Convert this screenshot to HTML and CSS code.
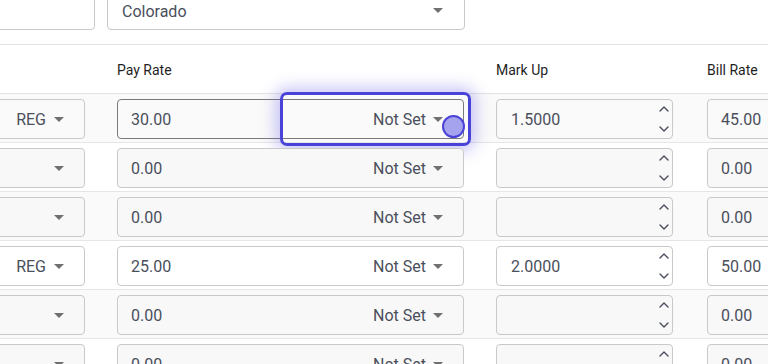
FILE: index.html
```html
<!DOCTYPE html>
<html>
<head>
<meta charset="utf-8">
<link rel="stylesheet" href="styles.css">
</head>
<body>
<div class="page">
  <div class="top">
    <div class="field top-left"></div>
    <div class="field top-state"><span class="val">Colorado</span><span class="caret"></span></div>
  </div>
  <div class="head">
    <div class="c1"></div>
    <div class="c2 label">Pay Rate</div>
    <div class="c3 label">Mark Up</div>
    <div class="c4 label">Bill Rate</div>
  </div>

  <div class="row odd">
    <div class="c1 field sel"><span class="val">REG</span><span class="caret"></span></div>
    <div class="c2 field pay focus"><span class="val">30.00</span><span class="ns">Not Set</span><span class="caret"></span>
      <div class="hl"></div><div class="dot"></div>
    </div>
    <div class="c3 field mk"><span class="val">1.5000</span><span class="spin"><svg width="10" height="28" viewBox="0 0 10 28"><polyline points="1,6 5,2 9,6"/><polyline points="1,22 5,26 9,22"/></svg></span></div>
    <div class="c4 field bill"><span class="val">45.00</span></div>
  </div>

  <div class="row">
    <div class="c1 field sel empty"><span class="val"></span><span class="caret"></span></div>
    <div class="c2 field pay empty"><span class="val">0.00</span><span class="ns">Not Set</span><span class="caret"></span></div>
    <div class="c3 field mk empty"><span class="val"></span><span class="spin"><svg width="10" height="28" viewBox="0 0 10 28"><polyline points="1,6 5,2 9,6"/><polyline points="1,22 5,26 9,22"/></svg></span></div>
    <div class="c4 field bill empty"><span class="val">0.00</span></div>
  </div>

  <div class="row odd">
    <div class="c1 field sel empty"><span class="val"></span><span class="caret"></span></div>
    <div class="c2 field pay empty"><span class="val">0.00</span><span class="ns">Not Set</span><span class="caret"></span></div>
    <div class="c3 field mk empty"><span class="val"></span><span class="spin"><svg width="10" height="28" viewBox="0 0 10 28"><polyline points="1,6 5,2 9,6"/><polyline points="1,22 5,26 9,22"/></svg></span></div>
    <div class="c4 field bill empty"><span class="val">0.00</span></div>
  </div>

  <div class="row">
    <div class="c1 field sel"><span class="val">REG</span><span class="caret"></span></div>
    <div class="c2 field pay"><span class="val">25.00</span><span class="ns">Not Set</span><span class="caret"></span></div>
    <div class="c3 field mk"><span class="val">2.0000</span><span class="spin"><svg width="10" height="28" viewBox="0 0 10 28"><polyline points="1,6 5,2 9,6"/><polyline points="1,22 5,26 9,22"/></svg></span></div>
    <div class="c4 field bill"><span class="val">50.00</span></div>
  </div>

  <div class="row odd">
    <div class="c1 field sel empty"><span class="val"></span><span class="caret"></span></div>
    <div class="c2 field pay empty"><span class="val">0.00</span><span class="ns">Not Set</span><span class="caret"></span></div>
    <div class="c3 field mk empty"><span class="val"></span><span class="spin"><svg width="10" height="28" viewBox="0 0 10 28"><polyline points="1,6 5,2 9,6"/><polyline points="1,22 5,26 9,22"/></svg></span></div>
    <div class="c4 field bill empty"><span class="val">0.00</span></div>
  </div>

  <div class="row">
    <div class="c1 field sel empty"><span class="val"></span><span class="caret"></span></div>
    <div class="c2 field pay empty"><span class="val">0.00</span><span class="ns">Not Set</span><span class="caret"></span></div>
    <div class="c3 field mk empty"><span class="val"></span><span class="spin"><svg width="10" height="28" viewBox="0 0 10 28"><polyline points="1,6 5,2 9,6"/><polyline points="1,22 5,26 9,22"/></svg></span></div>
    <div class="c4 field bill empty"><span class="val">0.00</span></div>
  </div>
</div>
</body>
</html>
```
FILE: styles.css
```css
html, body {
  margin: 0;
  padding: 0;
  background: #ffffff;
}
body {
  width: 768px;
  height: 364px;
  overflow: hidden;
  font-family: Roboto, "Liberation Sans", sans-serif;
  color: #4a4f5c;
}
.page {
  margin-left: -40px;
  width: 900px;
}
.top {
  height: 45px;
  display: flex;
  align-items: flex-end;
  gap: 12px;
  padding-bottom: 14px;
  box-sizing: border-box;
  border-bottom: 1px solid #e3e3e3;
}
.field {
  box-sizing: border-box;
  height: 40px;
  border: 1px solid #c9c9c9;
  border-radius: 4px;
  display: flex;
  align-items: center;
  font-size: 16px;
  position: relative;
}
.top .field {
  height: 40px;
  margin-top: -10px;
}
.top-left {
  width: 135px;
}
.top-state {
  width: 358px;
  padding: 3px 21px 0 14px;
}
.top-state .val {
  flex: 1;
}
.top-state .caret {
  margin-bottom: 2px;
}
.caret {
  width: 0;
  height: 0;
  border-left: 5px solid transparent;
  border-right: 5px solid transparent;
  border-top: 5px solid #707070;
}
.head {
  height: 48px;
  display: flex;
  align-items: center;
  border-bottom: 1px solid #e3e3e3;
  font-size: 14px;
  color: #1f1f1f;
}
.c1 { width: 125px; margin-right: 32px; flex: none; }
.c2 { width: 347px; margin-right: 32px; flex: none; }
.c3 { width: 177px; margin-right: 34px; flex: none; }
.c4 { width: 120px; flex: none; }
.label {
  padding-top: 1px;
}
.row {
  height: 49px;
  box-sizing: border-box;
  padding-top: 5px;
  display: flex;
  align-items: flex-start;
  border-bottom: 1px solid #e6e6e6;
  background: #ffffff;
}
.row.odd {
  background: #fafafa;
}
.field.empty {
  background: #f8f8f8;
}
.sel {
  justify-content: flex-end;
  padding-right: 20px;
}
.sel .val {
  margin-right: 8px;
}
.pay {
  padding: 0 20px 0 13px;
}
.pay .val {
  flex: 1;
}
.pay .ns {
  margin-right: 7px;
}
.pay.focus {
  border-color: #7a7a7a;
}
.mk {
  padding: 0 3px 0 14px;
}
.mk .val {
  flex: 1;
}
.spin {
  display: flex;
  align-items: center;
}
.spin svg polyline {
  fill: none;
  stroke: #4a4f5c;
  stroke-width: 1.4;
  stroke-linecap: round;
  stroke-linejoin: round;
}
.bill {
  padding-left: 13px;
}
.hl {
  position: absolute;
  left: 162px;
  top: -8px;
  width: 191px;
  height: 54px;
  box-sizing: border-box;
  border: 3px solid #4a43d8;
  border-radius: 7px;
  box-shadow: 0 0 16px 4px rgba(90, 80, 230, 0.35);
}
.dot {
  position: absolute;
  left: 324px;
  top: 15px;
  width: 23px;
  height: 23px;
  box-sizing: border-box;
  border-radius: 50%;
  background: #a6a3ee;
  border: 2.5px solid #4a43d8;
}
```
